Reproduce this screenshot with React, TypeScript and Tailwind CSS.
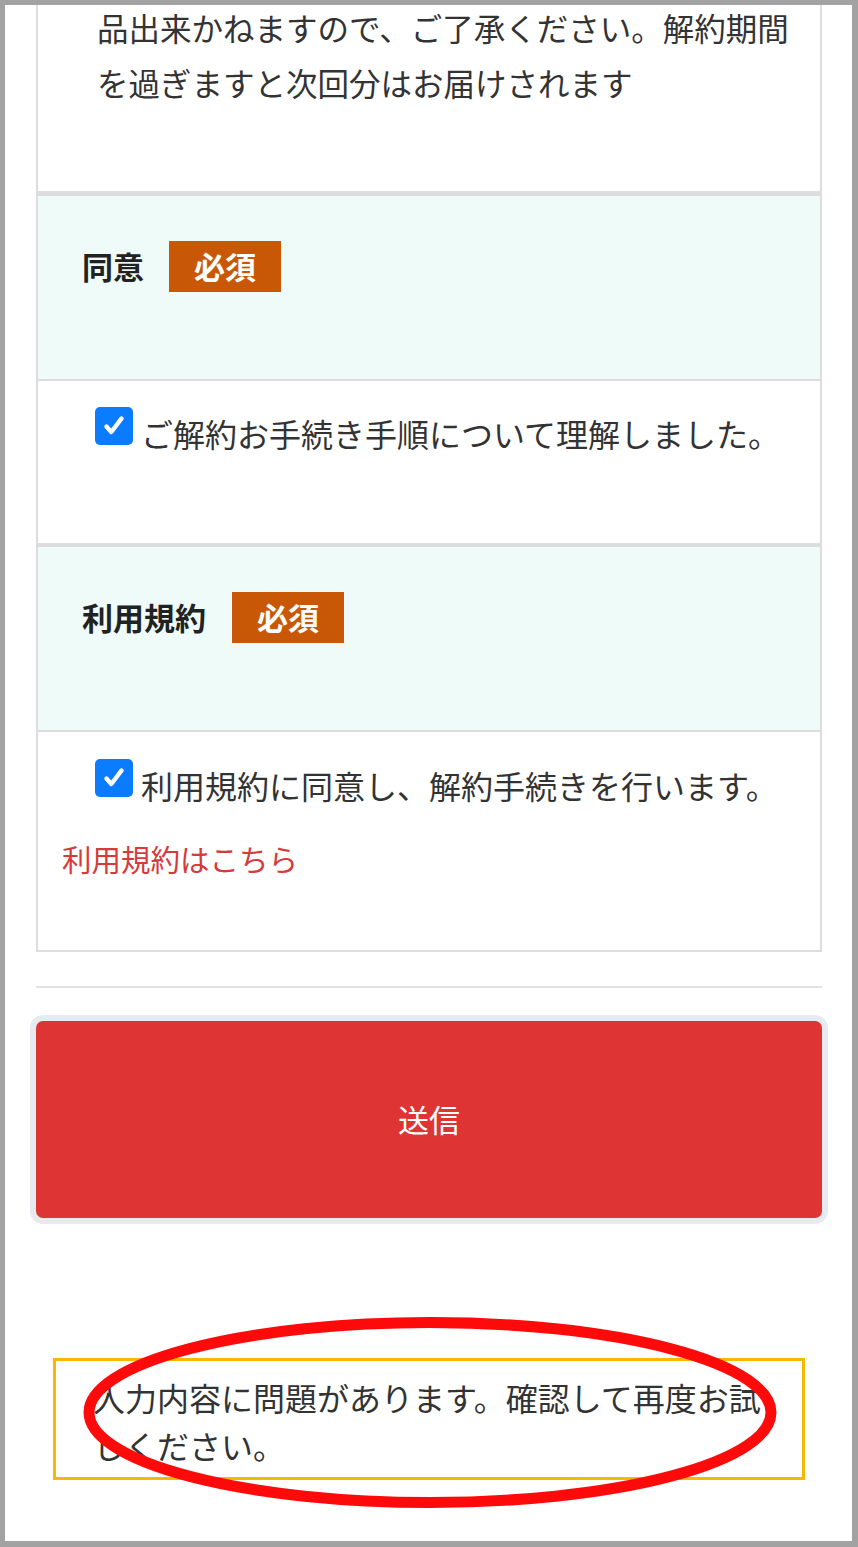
import React from "react";

function Badge() {
  return (
    <span className="inline-flex h-[51px] items-center bg-[#c85806] px-[25px] text-[31px] font-bold text-white">
      必須
    </span>
  );
}

function CheckBox() {
  return (
    <span className="mr-[8px] flex h-[38px] w-[38px] shrink-0 items-center justify-center rounded-[5px] bg-[#0b7cff]">
      <svg width="26" height="26" viewBox="0 0 24 24" fill="none">
        <path d="M5 12.5l4.5 5L19 5" stroke="#fff" strokeWidth="4" strokeLinecap="round" strokeLinejoin="round" />
      </svg>
    </span>
  );
}

export default function App() {
  return (
    <div className="relative box-border h-[1547px] w-[858px] overflow-hidden border-b-[6px] border-l-[5px] border-r-[6px] border-t-[5px] border-[#a2a2a2] bg-white font-['Noto_Sans_CJK_JP','Liberation_Sans',sans-serif] text-[#333]">
      <div className="pl-[31px] pr-[30px]">
        {/* form card */}
        <div className="-mt-[5px] border-x-2 border-b-2 border-[#dddddd]">
          <div className="-mt-[3px] border-b-[5px] border-[#dcdddd] pb-[81px] pl-[59px] text-[31.5px] leading-[55px] whitespace-nowrap">
            品出来かねますので、ご了承ください。解約期間
            <br />
            を過ぎますと次回分はお届けされます
          </div>

          <div className="border-b-2 border-[#dcdddd] bg-[#eefbf8] pb-[87px] pl-[44px] pt-[45px]">
            <div className="flex h-[51px] items-center gap-[25px]">
              <span className="text-[31px] font-bold text-[#222]">同意</span>
              <Badge />
            </div>
          </div>

          <div className="border-b-4 border-[#dcdddd] pb-[80px] pl-[57px] pt-[26px]">
            <label className="flex items-start">
              <CheckBox />
              <span className="-mt-[2px] mb-[2px] whitespace-nowrap text-[32px] leading-[56px]">ご解約お手続き手順について理解しました。</span>
            </label>
          </div>

          <div className="border-b-2 border-[#dcdddd] bg-[#eefbf8] pb-[87px] pl-[44px] pt-[45px]">
            <div className="flex h-[51px] items-center gap-[26px]">
              <span className="text-[31px] font-bold text-[#222]">利用規約</span>
              <Badge />
            </div>
          </div>

          <div className="pb-[64px] pt-[27px]">
            <label className="flex items-start pl-[57px]">
              <CheckBox />
              <span className="-mt-[2px] mb-[2px] whitespace-nowrap text-[32px] leading-[56px]">利用規約に同意し、解約手続きを行います。</span>
            </label>
            <a className="mt-[15px] block pl-[24px] text-[29.5px] leading-[56px] text-[#d63a3a]">利用規約はこちら</a>
          </div>
        </div>

        <hr className="mt-[34px] border-t-2 border-[#e2e2e2]" />

        <button className="mt-[33px] flex h-[197px] w-full items-center justify-center rounded-[7px] bg-[#de3434] text-[31px] text-white ring-[6px] ring-[#e7ebef]">
          送信
        </button>

        <div className="mx-[17px] mt-[140px] border-[3px] border-[#f6b800] pb-[8px] pl-[37px] pt-[12px] text-[32px] leading-[48px] whitespace-nowrap">
          入力内容に問題があります。確認して再度お試
          <br />
          しください。
        </div>
      </div>

      {/* annotation ellipse drawn over the page */}
      <svg className="pointer-events-none absolute left-[78px] top-[1312px]" width="694" height="191" viewBox="0 0 694 191">
        <ellipse cx="347" cy="95.5" rx="341" ry="90" fill="none" stroke="#ff0a0a" strokeWidth="11" />
      </svg>
    </div>
  );
}
